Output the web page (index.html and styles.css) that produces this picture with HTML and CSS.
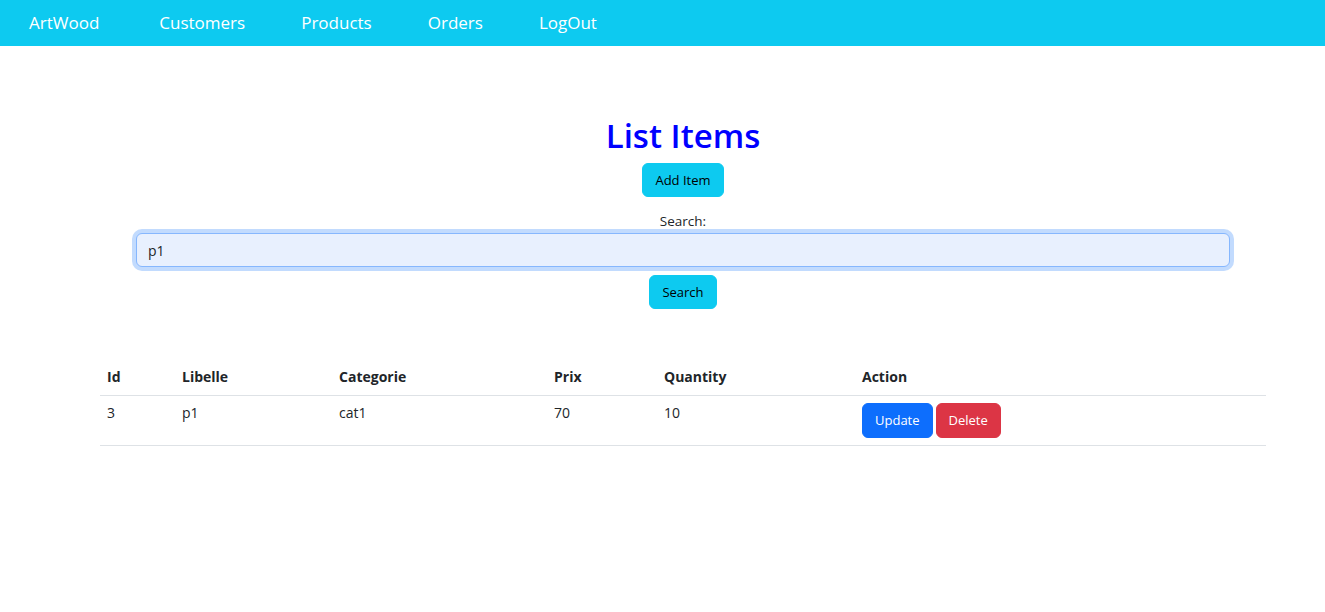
FILE: index.html
```html
<!DOCTYPE html>
<html lang="en">
<head>
<meta charset="utf-8">
<title>ArtWood - List Items</title>
<link rel="stylesheet" href="styles.css">
</head>
<body>
<nav class="navbar">
  <a class="nav-link brand" href="#">ArtWood</a>
  <a class="nav-link" href="#">Customers</a>
  <a class="nav-link" href="#">Products</a>
  <a class="nav-link" href="#">Orders</a>
  <a class="nav-link" href="#">LogOut</a>
</nav>
<main class="page">
  <h1 class="title">List Items</h1>
  <div class="center"><button class="btn btn-info">Add Item</button></div>
  <form class="search-form">
    <label class="search-label" for="q">Search:</label>
    <input id="q" class="search-input" type="text" value="p1">
    <div class="center"><button type="button" class="btn btn-info">Search</button></div>
  </form>
  <table class="items">
    <colgroup>
      <col class="c-id"><col class="c-lib"><col class="c-cat"><col class="c-prix"><col class="c-qty"><col class="c-act">
    </colgroup>
    <thead>
      <tr><th>Id</th><th>Libelle</th><th>Categorie</th><th>Prix</th><th>Quantity</th><th>Action</th></tr>
    </thead>
    <tbody>
      <tr>
        <td>3</td><td>p1</td><td>cat1</td><td>70</td><td>10</td>
        <td class="actions"><button class="btn btn-primary">Update</button><button class="btn btn-danger">Delete</button></td>
      </tr>
    </tbody>
  </table>
</main>
</body>
</html>
```

FILE: styles.css
```css
* { box-sizing: border-box; }
body {
  margin: 0;
  font-family: "Open Sans", "Noto Sans", sans-serif;
  font-size: 14px;
  color: #212529;
  background: #fff;
}
.navbar {
  height: 46px;
  background: #0dcaf0;
  display: flex;
  align-items: center;
  padding-left: 29px;
  padding-bottom: 2px;
}
.nav-link {
  color: #fff;
  text-decoration: none;
  font-size: 17px;
  margin-right: 56px;
}
.brand { margin-right: 60px; }
.page {
  padding: 0 59px 0 100px;
}
.title {
  margin: 0;
  padding-top: 66px;
  text-align: center;
  color: #0000ff;
  font-size: 33px;
  font-weight: 600;
  line-height: 48px;
}
.center { text-align: center; }
.btn {
  font-family: inherit;
  font-size: 13px;
  line-height: 21px;
  padding: 6px 12px;
  border: 1px solid transparent;
  border-radius: 6px;
  cursor: pointer;
}
.btn-info { background: #0dcaf0; border-color: #0dcaf0; color: #000; line-height: 20px; }
.btn-primary { background: #0d6efd; border-color: #0d6efd; color: #fff; }
.btn-danger { background: #dc3545; border-color: #dc3545; color: #fff; }
.title + .center { margin-top: 3px; }
.search-form {
  padding: 0 36px;
  margin-top: 14px;
}
.search-label {
  display: block;
  text-align: center;
  line-height: 20px;
  font-size: 13.5px;
  margin-bottom: 2px;
}
.search-input {
  display: block;
  width: 100%;
  height: 34px;
  padding: 6px 11px;
  font-family: inherit;
  font-size: 14px;
  color: #212529;
  background: #e8f0fe;
  border: 1px solid #86b7fe;
  border-radius: 6px;
  box-shadow: 0 0 0 4px rgba(13,110,253,.25);
  outline: none;
}
.search-form .center { margin-top: 8px; }
.items {
  width: 100%;
  margin-top: 50px;
  border-collapse: collapse;
  table-layout: fixed;
}
.c-id { width: 75px; }
.c-lib { width: 157px; }
.c-cat { width: 215px; }
.c-prix { width: 110px; }
.c-qty { width: 198px; }
.items th, .items td {
  text-align: left;
  vertical-align: top;
  padding: 7px 7px;
  line-height: 20px;
  border-bottom: 1px solid #dee2e6;
}
.items th { font-weight: 700; padding: 8px 7px 8px; }
.actions .btn + .btn { margin-left: 3px; }
```
